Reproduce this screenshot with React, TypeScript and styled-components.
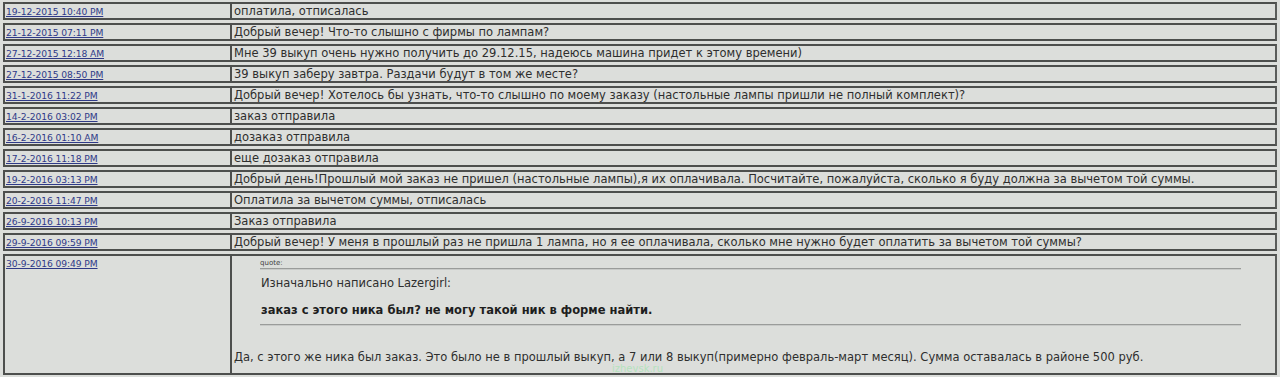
import React from "react";
import styled, { createGlobalStyle } from "styled-components";

const Global = createGlobalStyle`
  html, body { margin: 0; padding: 0; background: #dcdedb; }
  body { font-family: "DejaVu Sans", Verdana, sans-serif; color: #2e2e2e; }
`;

const Page = styled.div`
  padding: 2px 3px 0 3px;
  display: flex;
  flex-direction: column;
  gap: 3px;
  position: relative;
  height: 377px;
  overflow: hidden;
  box-sizing: border-box;
`;

const Row = styled.div<{ $tall?: boolean }>`
  display: grid;
  grid-template-columns: 227px 1fr;
  border: 2px solid #4d4f4d;
  border-right-color: #5a5c5a;
  background: #dcdedb;
  height: ${(p) => (p.$tall ? "117px" : "14px")};
  flex-shrink: 0;
`;

const DateCell = styled.div`
  border-right: 2px solid #4d4f4d;
  padding: 0 1px;
  line-height: 11px;
`;

const DateLink = styled.a`
  font-size: 9.2px;
  color: #2f3a88;
  text-decoration: underline;
  font-family: "DejaVu Sans", Verdana, sans-serif;
  letter-spacing: -0.1px;
`;

const MsgCell = styled.div`
  padding: 0 2px;
  font-size: 11.5px;
  line-height: 14px;
  color: #2e2e2e;
  white-space: nowrap;
`;

const Quote = styled.div`
  margin: 0 32px 0 26px;
  padding-top: 2px;
`;

const QuoteLabel = styled.div`
  font-size: 7px;
  line-height: 10px;
  color: #444;
`;

const Rule = styled.div`
  height: 1px;
  background: #9a9c9a;
  border-bottom: 1px solid #c8cac8;
`;

const QuoteAuthor = styled.div`
  padding: 6px 0 0 1px;
  font-size: 11.5px;
  line-height: 15px;
`;

const QuoteBody = styled.div`
  padding: 12px 0 6px 1px;
  font-size: 11.5px;
  line-height: 15px;
  font-weight: bold;
  color: #1e1e1e;
`;

const Reply = styled.div`
  padding-top: 24px;
`;

const Watermark = styled.div`
  position: absolute;
  left: 612px;
  top: 364px;
  font-size: 10px;
  line-height: 10px;
  color: #b4e2bd;
  font-family: "DejaVu Sans", sans-serif;
`;

const rows: [string, string][] = [
  ["19-12-2015 10:40 PM", "оплатила, отписалась"],
  ["21-12-2015 07:11 PM", "Добрый вечер! Что-то слышно с фирмы по лампам?"],
  ["27-12-2015 12:18 AM", "Мне 39 выкуп очень нужно получить до 29.12.15, надеюсь машина придет к этому времени)"],
  ["27-12-2015 08:50 PM", "39 выкуп заберу завтра. Раздачи будут в том же месте?"],
  ["31-1-2016 11:22 PM", "Добрый вечер! Хотелось бы узнать, что-то слышно по моему заказу (настольные лампы пришли не полный комплект)?"],
  ["14-2-2016 03:02 PM", "заказ отправила"],
  ["16-2-2016 01:10 AM", "дозаказ отправила"],
  ["17-2-2016 11:18 PM", "еще дозаказ отправила"],
  ["19-2-2016 03:13 PM", "Добрый день!Прошлый мой заказ не пришел (настольные лампы),я их оплачивала. Посчитайте, пожалуйста, сколько я буду должна за вычетом той суммы."],
  ["20-2-2016 11:47 PM", "Оплатила за вычетом суммы, отписалась"],
  ["26-9-2016 10:13 PM", "Заказ отправила"],
  ["29-9-2016 09:59 PM", "Добрый вечер! У меня в прошлый раз не пришла 1 лампа, но я ее оплачивала, сколько мне нужно будет оплатить за вычетом той суммы?"],
];

export default function App() {
  return (
    <>
      <Global />
      <Page>
        {rows.map(([d, m]) => (
          <Row key={d}>
            <DateCell>
              <DateLink href="#">{d}</DateLink>
            </DateCell>
            <MsgCell>{m}</MsgCell>
          </Row>
        ))}
        <Row $tall>
          <DateCell>
            <DateLink href="#">30-9-2016 09:49 PM</DateLink>
          </DateCell>
          <MsgCell>
            <Quote>
              <QuoteLabel>quote:</QuoteLabel>
              <Rule />
              <QuoteAuthor>Изначально написано Lazergirl:</QuoteAuthor>
              <QuoteBody>заказ с этого ника был? не могу такой ник в форме найти.</QuoteBody>
              <Rule />
            </Quote>
            <Reply>
              Да, с этого же ника был заказ. Это было не в прошлый выкуп, а 7 или 8 выкуп(примерно февраль-март месяц). Сумма оставалась в районе 500 руб.
            </Reply>
          </MsgCell>
        </Row>
        <Watermark>izhevsk.ru</Watermark>
      </Page>
    </>
  );
}
